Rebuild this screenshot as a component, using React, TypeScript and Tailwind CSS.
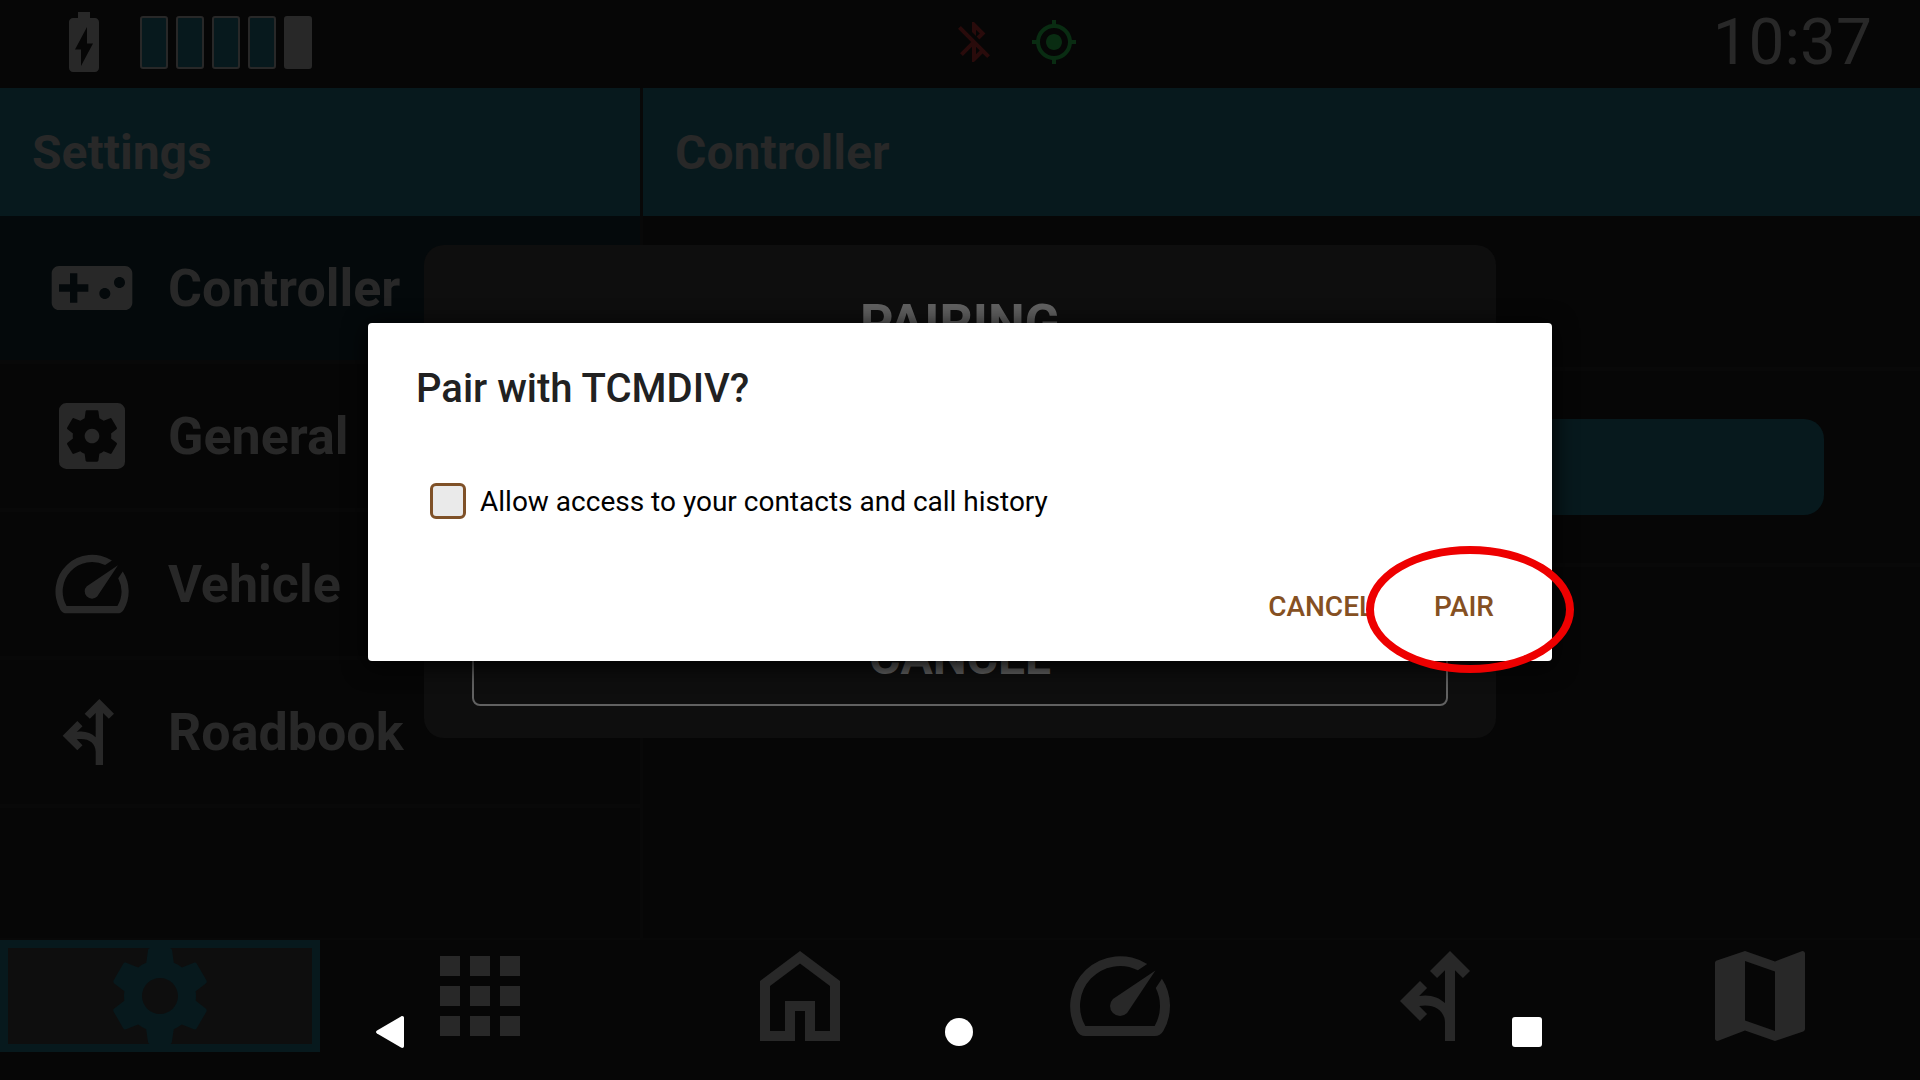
import {
  MdApps,
  MdBatteryChargingFull,
  MdBluetoothDisabled,
  MdMap,
  MdMyLocation,
  MdSettings,
  MdSettingsApplications,
  MdSpeed,
  MdVideogameAsset,
} from "react-icons/md"

type IconProps = { className?: string }

type Item = {
  label: string
  icon: React.ElementType
  active?: boolean
}

const ForkIcon = ({ className }: IconProps) => (
  <svg viewBox="0 0 24 24" fill="currentColor" className={className} aria-hidden="true">
    <path d="M14 3l-4 4 1.41 1.41L13 6.83v6.57C11.7 12.2 9.9 11.6 7.83 12l1.58-1.59L8 9l-4 4 4 4 1.41-1.41L7.83 14c2.9-.5 5.17.8 5.17 3.4V21h2V6.83l1.59 1.58L18 7z" />
  </svg>
)

const HomeIcon = ({ className }: IconProps) => (
  <svg viewBox="0 0 24 24" fill="currentColor" className={className} aria-hidden="true">
    <path fillRule="evenodd" d="M12 3l8 6v12h-7v-6h-2v6H4V9zM12 5.5L6 10v9h3v-6h6v6h3v-9z" />
  </svg>
)

const settings: Item[] = [
  { label: "Controller", icon: MdVideogameAsset, active: true },
  { label: "General", icon: MdSettingsApplications },
  { label: "Vehicle", icon: MdSpeed },
  { label: "Roadbook", icon: ForkIcon },
]

const tabs: Item[] = [
  { label: "Settings", icon: MdSettings, active: true },
  { label: "Apps", icon: MdApps },
  { label: "Home", icon: HomeIcon },
  { label: "Vehicle", icon: MdSpeed },
  { label: "Roadbook", icon: ForkIcon },
  { label: "Map", icon: MdMap },
]

const charge = [true, true, true, true, false]

const StatusBar = () => (
  <header className="grid h-[88px] grid-cols-3 items-center pr-12 pb-1 pl-12">
    <div className="flex items-center gap-5">
      <MdBatteryChargingFull className="size-[72px]" />
      <div className="flex gap-2">
        {charge.map((full, i) => (
          <span
            key={i}
            className={`h-[53px] w-7 rounded-[3px] border-2 border-[#282828] ${full ? "bg-[#07191d]" : "bg-[#282828]"}`}
          />
        ))}
      </div>
    </div>
    <div className="flex justify-center gap-8 pl-[108px]">
      <MdBluetoothDisabled className="size-12 text-[#290b0b]" />
      <MdMyLocation className="size-12 text-[#092c12]" />
    </div>
    <time className="pt-0.5 text-right text-[64px] leading-[72px] font-normal">10:37</time>
  </header>
)

const Sidebar = () => (
  <aside className="flex w-1/3 flex-col">
    <h1 className="flex h-32 items-center bg-[#07191d] px-8 pt-0.5 text-[48px] font-bold">Settings</h1>
    <nav>
      {settings.map(({ label, icon: Icon, active }) => (
        <button
          key={label}
          className={`flex h-[148px] w-full items-center gap-8 border-b-4 border-[#080808] px-12 text-[52px] font-bold ${active ? "bg-[#04090b]" : ""}`}
        >
          <Icon className="size-[88px]" />
          <span className="pt-0.5">{label}</span>
        </button>
      ))}
    </nav>
  </aside>
)

const ControllerPanel = () => (
  <section className="flex flex-1 flex-col border-l-3 border-[#080808]">
    <h2 className="flex h-32 items-center bg-[#07191d] px-8 pt-0.5 text-[48px] font-bold">Controller</h2>
    <div className="h-[155px] border-b-4 border-[#080808]" />
    <div className="border-b-4 border-[#080808] px-24 py-12">
      <button aria-label="Pair controller" className="block h-24 w-full rounded-[20px] bg-[#07191d]" />
    </div>
  </section>
)

const TabBar = () => (
  <nav className="grid h-[114px] grid-cols-6 border-t-2 border-[#080808]">
    {tabs.map(({ label, icon: Icon, active }) => (
      <button
        key={label}
        aria-label={label}
        className={`flex h-28 items-center justify-center overflow-hidden ${active ? "border-8 border-[#07191d] bg-[#0e0e0e] text-[#07191d]" : ""}`}
      >
        <Icon className="size-[120px] shrink-0" />
      </button>
    ))}
  </nav>
)

const PairingPanel = () => (
  <div className="absolute inset-x-0 top-[245px] mx-auto flex h-[493px] w-[1072px] flex-col justify-between rounded-[20px] bg-[#0e0e0e] px-12 pt-10 pb-8 text-center font-bold text-[#616161]">
    <h2 className="text-[52px]">PAIRING</h2>
    <button className="h-24 rounded-lg border-2 border-[#616161] text-[48px]">CANCEL</button>
  </div>
)

const PairDialog = () => (
  <div
    role="dialog"
    aria-labelledby="pair-title"
    className="absolute inset-x-0 top-[323px] mx-auto flex h-[338px] w-[1184px] flex-col rounded bg-white px-12 shadow-[0_4px_24px_#000]"
  >
    <h2 id="pair-title" className="pt-9 text-[40px] leading-[60px] font-medium text-[#212121]">
      Pair with TCMDIV?
    </h2>
    <label className="mt-14 flex items-center gap-3.5 pl-3.5 text-[28px] leading-[50px] text-black">
      <input
        type="checkbox"
        className="size-9 appearance-none rounded-md border-[3px] border-[#7f5128] bg-[#eaeaea]"
      />
      <span className="pt-0.5">Allow access to your contacts and call history</span>
    </label>
    <div className="mt-11 flex justify-end gap-9 pr-0.5 text-[28px] leading-[72px] font-medium text-[#855022]">
      <button className="px-4">CANCEL</button>
      <button className="px-2">PAIR</button>
    </div>
    <div className="pointer-events-none absolute -right-[22px] -bottom-3 h-[127px] w-[208px] rounded-[50%] border-8 border-[#ee0000]" />
  </div>
)

const SystemNav = () => (
  <div className="absolute inset-x-0 bottom-8 mx-auto flex h-8 w-[1172px] items-center justify-between pr-1 text-white">
    <button aria-label="Back">
      <svg viewBox="0 0 32 32" fill="currentColor" className="size-8" aria-hidden="true">
        <path d="M27 .4c1.6-.8 3 0 3 1.600v28c0 1.600-1.400 2.400-3 1.600L3 17.400c-1.300-.8-1.300-2 0-2.800z" />
      </svg>
    </button>
    <button aria-label="Home" className="size-7 rounded-full bg-white" />
    <button aria-label="Recent apps" className="size-[30px] rounded-[3px] bg-white" />
  </div>
)

export default function App() {
  return (
    <div className="relative flex min-h-screen flex-col overflow-hidden bg-[#060606] pb-7 font-['Roboto',sans-serif] text-[#282828]">
      <StatusBar />
      <main className="flex flex-1">
        <Sidebar />
        <ControllerPanel />
      </main>
      <TabBar />
      <PairingPanel />
      <PairDialog />
      <SystemNav />
    </div>
  )
}
